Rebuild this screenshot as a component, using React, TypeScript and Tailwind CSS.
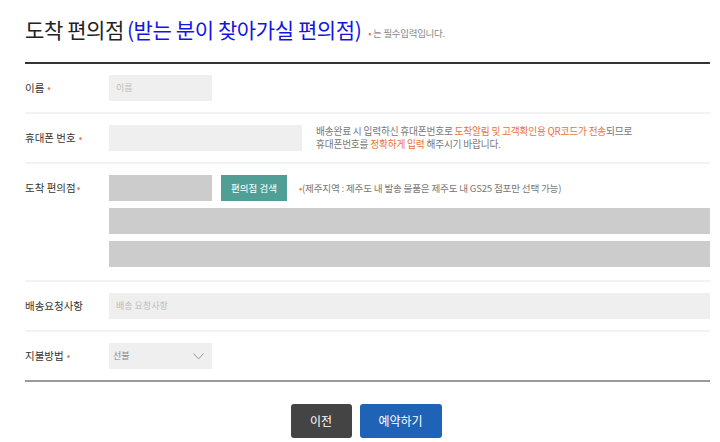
const font = { fontFamily: '"Noto Sans CJK KR", "Noto Sans", sans-serif' };

function Req({ tight }: { tight?: boolean }) {
  return <span className={`${tight ? "ml-[1px]" : "ml-[3px]"} text-[#f07b4a]`}>•</span>;
}

function Row({ label, req, tight, children, last }: { label: string; req?: boolean; tight?: boolean; children: React.ReactNode; last?: boolean }) {
  return (
    <div className={`flex py-[11px] ${last ? "" : "border-b-2 border-[#f3f3f3]"}`}>
      <div className="w-[84px] shrink-0 h-[26px] flex items-center text-[10.5px] text-[#333]">
        {label}
        {req && <Req tight={tight} />}
      </div>
      <div className="flex-1">{children}</div>
    </div>
  );
}

export default function App() {
  return (
    <div className="w-[720px] h-[442px] bg-white overflow-hidden" style={font}>
      <div className="ml-[25px] w-[685px]">
        {/* title */}
        <div className="h-[62px] flex items-center pb-[2px]">
          <h1 className="text-[21px] text-[#222] tracking-[-0.4px]">
            도착 편의점<span className="ml-[3px] text-[#1515e0]">(받는 분이 찾아가실 편의점)</span>
          </h1>
          <span className="ml-[7px] mt-[6px] text-[9.5px] text-[#888] tracking-[-0.3px]">
            <span className="text-[#f07b4a]">•</span> 는 필수입력입니다.
          </span>
        </div>
        <div className="h-[2px] bg-[#333]" />

        <Row label="이름" req>
          <div className="w-[103px] h-[26px] bg-[#efefef] flex items-center px-[7px] text-[9px] text-[#bbb]">이름</div>
        </Row>

        <Row label="휴대폰 번호" req>
          <div className="flex items-center gap-[14px]">
            <div className="w-[193px] h-[26px] bg-[#efefef]" />
            <p className="text-[9.7px] leading-[13px] text-[#777] tracking-[-0.2px]">
              배송완료 시 입력하신 휴대폰번호로 <span className="text-[#ea6f3a]">도착알림 및 고객확인용 QR코드가 전송</span>되므로
              <br />
              휴대폰번호를 <span className="text-[#ea6f3a]">정확하게 입력</span> 해주시기 바랍니다.
            </p>
          </div>
        </Row>

        <Row label="도착 편의점" req tight>
          <div className="flex flex-col gap-[7px] pb-[2px]">
            <div className="flex items-center">
              <div className="w-[103px] h-[26px] bg-[#cccccc]" />
              <button className="ml-[9px] w-[66px] h-[26px] bg-[#4f9f97] text-white text-[9.5px]">편의점 검색</button>
              <span className="ml-[12px] text-[9.6px] text-[#777] tracking-[-0.2px]">
                <span className="text-[#f07b4a]">•</span>(제주지역 : 제주도 내 발송 물품은 제주도 내 GS25 점포만 선택 가능)
              </span>
            </div>
            <div className="h-[26px] bg-[#cccccc]" />
            <div className="h-[26px] bg-[#cccccc]" />
          </div>
        </Row>

        <Row label="배송요청사항">
          <div className="h-[26px] bg-[#efefef] flex items-center px-[7px] text-[9px] text-[#bbb]">배송 요청사항</div>
        </Row>

        <Row label="지불방법" req last>
          <div className="w-[103px] h-[26px] bg-[#efefef] flex items-center justify-between px-[4px] pr-[8px] text-[9px] text-[#888]">
            선불
            <svg width="11" height="7" viewBox="0 0 11 7" fill="none" stroke="#999" strokeWidth="1">
              <path d="M0.5 0.5 L5.5 6 L10.5 0.5" />
            </svg>
          </div>
        </Row>
        <div className="h-[2px] bg-[#9a9a9a]" />

        <div className="flex justify-center gap-[8px] mt-[22px] pr-[3px]">
          <button className="w-[61px] h-[34px] rounded-[3px] bg-[#444] text-white text-[12px]">이전</button>
          <button className="w-[82px] h-[34px] rounded-[3px] bg-[#1f63b6] text-white text-[12px]">예약하기</button>
        </div>
      </div>
    </div>
  );
}
